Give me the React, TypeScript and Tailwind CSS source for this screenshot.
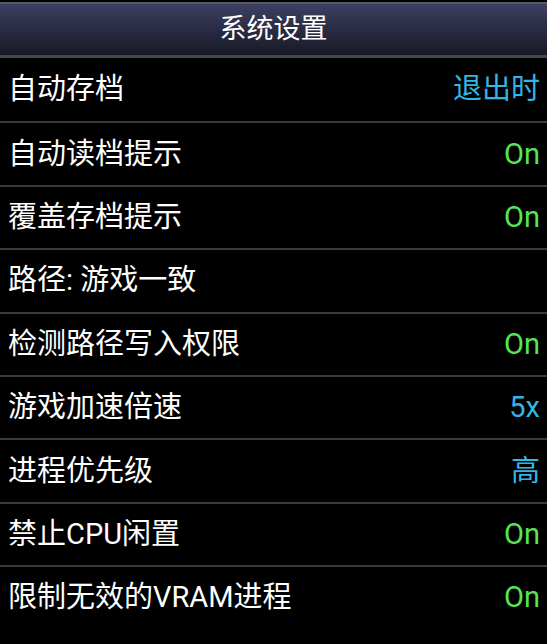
import React from 'react';

type Row = { label: string; value?: string; tone?: 'blue' | 'green' };

const rows: Row[] = [
  { label: '自动存档', value: '退出时', tone: 'blue' },
  { label: '自动读档提示', value: 'On', tone: 'green' },
  { label: '覆盖存档提示', value: 'On', tone: 'green' },
  { label: '路径: 游戏一致' },
  { label: '检测路径写入权限', value: 'On', tone: 'green' },
  { label: '游戏加速倍速', value: '5x', tone: 'blue' },
  { label: '进程优先级', value: '高', tone: 'blue' },
  { label: '禁止CPU闲置', value: 'On', tone: 'green' },
  { label: '限制无效的VRAM进程', value: 'On', tone: 'green' },
];

const App = () => {
  return (
    <div
      className="w-[547px] h-[644px] bg-black overflow-hidden"
      style={{ fontFamily: 'Roboto, "Noto Sans CJK SC", sans-serif' }}
    >
      {/* title bar */}
      <div className="pt-[2px]">
        <div className="h-[2px] bg-[#5a5b62]" />
        <div className="h-[51px] flex items-center justify-center bg-gradient-to-b from-[#3d4063] to-[#181926]">
          <span className="text-[27px] text-white leading-none">系统设置</span>
        </div>
        <div className="h-[3px] bg-[#46474c]" />
      </div>

      {rows.map((row, i) => (
        <div
          key={row.label}
          className={`h-[63.4px] flex items-center justify-between pl-[8px] pr-[7px] ${
            i > 0 ? 'border-t-2 border-[#3a3a3a]' : ''
          }`}
        >
          <span className="text-[29px] text-white leading-none">{row.label}</span>
          {row.value && (
            <span
              className={`text-[29px] leading-none ${
                row.tone === 'blue' ? 'text-[#33b5e5]' : 'text-[#55e655]'
              }`}
            >
              {row.value}
            </span>
          )}
        </div>
      ))}
    </div>
  );
};

export default App;
